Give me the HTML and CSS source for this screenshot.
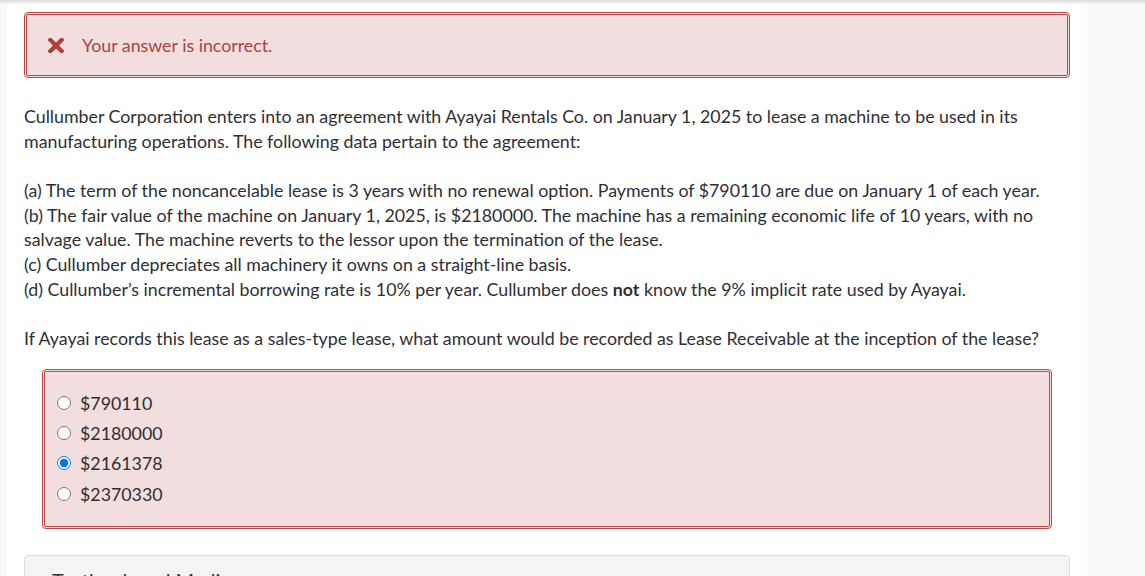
FILE: index.html
```html
<!DOCTYPE html>
<html>
<head>
<meta charset="utf-8">
<link rel="stylesheet" href="styles.css">
</head>
<body>
<div class="topshade"></div>
<div class="layout">
  <div class="gutter"></div>
  <main class="main">
    <div class="alert">
      <svg class="x-icon" width="16" height="15" viewBox="0 0 16 15"><path d="M2.4 1.9 L13.6 13.1 M13.6 1.9 L2.4 13.1" stroke="#ad3f3d" stroke-width="4.2" stroke-linecap="square"/></svg>
      <span class="alert-text">Your answer is incorrect.</span>
    </div>
    <p class="question">Cullumber Corporation enters into an agreement with Ayayai Rentals Co. on January 1, 2025 to lease a machine to be used in its manufacturing operations. The following data pertain to the agreement:<br><br>(a) The term of the noncancelable lease is 3 years with no renewal option. Payments of $790110 are due on January 1 of each year.<br>(b) The fair value of the machine on January 1, 2025, is $2180000. The machine has a remaining economic life of 10 years, with no salvage value. The machine reverts to the lessor upon the termination of the lease.<br>(c) Cullumber depreciates all machinery it owns on a straight-line basis.<br>(d) Cullumber’s incremental borrowing rate is 10% per year. Cullumber does <b>not</b> know the 9% implicit rate used by Ayayai.<br><br>If Ayayai records this lease as a sales-type lease, what amount would be recorded as Lease Receivable at the inception of the lease?</p>
    <div class="answers">
      <label class="opt"><input type="radio" name="a">$790110</label>
      <label class="opt"><input type="radio" name="a">$2180000</label>
      <label class="opt"><input type="radio" name="a" checked>$2161378</label>
      <label class="opt"><input type="radio" name="a">$2370330</label>
    </div>
    <div class="media">Textbook and Media</div>
  </main>
  <div class="side"></div>
</div>
</body>
</html>
```
FILE: styles.css
```css
html, body { margin: 0; padding: 0; }
body {
  background: #ffffff;
  font-family: Lato, "Open Sans", sans-serif;
  color: #2f2f33;
  overflow: hidden;
  height: 576px;
}
.topshade {
  position: absolute;
  left: 0; right: 0; top: 0;
  height: 5px;
  background: linear-gradient(#dcdcdc, rgba(255,255,255,0));
  z-index: 2;
}
.layout { display: flex; height: 576px; }
.gutter { width: 7px; background: #f8f8f8; flex: none; }
.side { flex: 1; background: #fafafa; }
.main {
  width: 1046px;
  flex: none;
  padding: 12px 17px 0 17px;
  background: #fff;
}
.alert {
  box-sizing: border-box;
  height: 66px;
  border: 3px double #b94a48;
  border-radius: 4px;
  background: #f2dede;
  display: flex;
  align-items: center;
  padding-left: 21px;
}
.x-icon { flex: none; }
.alert-text {
  margin-left: 18px;
  color: #a94442;
  font-size: 17.8px;
}
.question {
  margin: 26px 0 0 0;
  font-size: 17.8px;
  line-height: 24.65px;
}
.question b { font-weight: 700; }
.answers {
  margin: 18px 18px 0 18px;
  border: 3px double #b94a48;
  border-radius: 4px;
  background: #f2dede;
  padding: 16px 12px 17px 12px;
  display: flex;
  flex-direction: column;
}
.opt {
  display: flex;
  align-items: center;
  height: 30.3px;
  font-size: 17.8px;
  color: #2f2f33;
}
.opt input {
  width: 14px; height: 14px;
  margin: 0 9px 0 0;
  flex: none;
}
.media {
  margin-top: 26px;
  height: 60px;
  border: 1px solid #dddddd;
  border-radius: 4px;
  background: #f4f4f4;
  padding: 12px 27px;
  font-size: 20px;
  color: #333;
}
```
